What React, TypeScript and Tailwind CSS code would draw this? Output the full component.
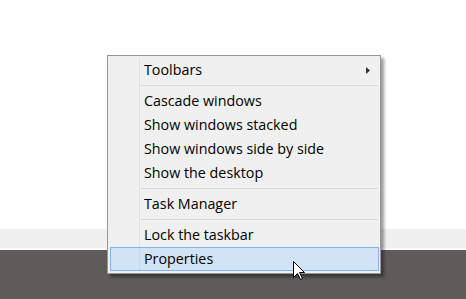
const font = { fontFamily: '"Segoe UI", "Open Sans", "Noto Sans", sans-serif' };

type Entry =
  | { kind: "item"; label: string; submenu?: boolean; active?: boolean }
  | { kind: "sep" };

const entries: Entry[] = [
  { kind: "item", label: "Toolbars", submenu: true },
  { kind: "sep" },
  { kind: "item", label: "Cascade windows" },
  { kind: "item", label: "Show windows stacked" },
  { kind: "item", label: "Show windows side by side" },
  { kind: "item", label: "Show the desktop" },
  { kind: "sep" },
  { kind: "item", label: "Task Manager" },
  { kind: "sep" },
  { kind: "item", label: "Lock the taskbar" },
  { kind: "item", label: "Properties", active: true },
];

function MenuRow({ entry }: { entry: Entry }) {
  if (entry.kind === "sep") {
    return (
      <div className="flex h-[7px]">
        <div className="w-[29px] shrink-0" />
        <div className="flex flex-1 items-center border-l border-[#e0e0e0] pl-px pr-px">
          <div className="h-px w-full bg-[#d7d7d7]" />
        </div>
      </div>
    );
  }
  return (
    <div
      className={
        entry.active
          ? "flex h-[24px] border border-[#7eb4ea] bg-[#d1e3f5]"
          : "flex h-[24px]"
      }
    >
      <div className={entry.active ? "w-[28px] shrink-0" : "w-[29px] shrink-0"} />
      <div
        className={
          entry.active
            ? "flex flex-1 items-center justify-between border-l border-[#c6d8ea] pl-[4px] pr-[8px]"
            : "flex flex-1 items-center justify-between border-l border-[#e0e0e0] pl-[4px] pr-[9px]"
        }
      >
        <span className="text-[14.3px] leading-none text-black">{entry.label}</span>
        {entry.submenu && (
          <svg width="4" height="7" viewBox="0 0 4 7">
            <polygon points="0,0 4,3.5 0,7" fill="#333" />
          </svg>
        )}
      </div>
    </div>
  );
}

export default function App() {
  return (
    <div className="relative flex h-[299px] w-[466px] flex-col overflow-hidden bg-white" style={font}>
      <div className="h-[229px] bg-white" />
      <div className="h-[19px] bg-[#f0f0f0]" />
      <div className="h-[2px] bg-[#fafafa]" />
      <div className="flex-1 bg-[#5d5c5a]" />

      {/* context menu */}
      <div className="absolute left-[107px] top-[55px] w-[274px] border border-[#979797] bg-[#f0f0f0] pb-[2px] pl-[2px] pr-px pt-[2px] shadow-[3px_3px_3px_rgba(0,0,0,0.4)]">
        {entries.map((e, i) => (
          <MenuRow key={i} entry={e} />
        ))}
      </div>

      {/* mouse cursor */}
      <svg className="absolute left-[292px] top-[260px]" width="14" height="22" viewBox="0 0 14 22">
        <polygon
          points="1.5,1.5 1.5,17.5 5.5,13.5 8.5,19.5 10.5,18.5 7.5,12.5 12.5,12.5"
          fill="#fff"
          stroke="#000"
          strokeWidth="1"
          strokeLinejoin="miter"
        />
      </svg>
    </div>
  );
}
